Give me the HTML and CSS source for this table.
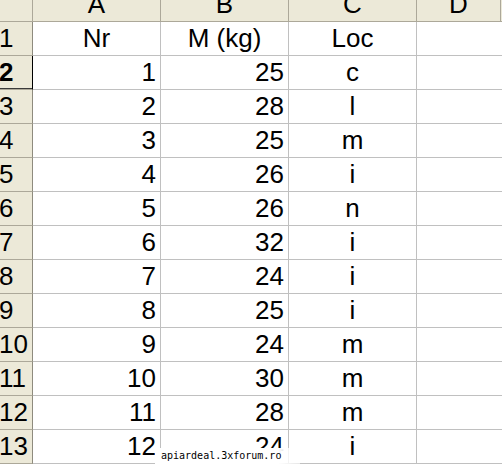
FILE: index.html
```html
<!DOCTYPE html>
<html>
<head>
<meta charset="utf-8">
<link rel="stylesheet" href="styles.css">
</head>
<body>
<div class="sheet">
  <div class="hd corner"></div>
  <div class="hd col"><span>A</span></div>
  <div class="hd col"><span>B</span></div>
  <div class="hd col"><span>C</span></div>
  <div class="hd col"><span>D</span></div>
  <div class="hd colend"></div>

  <div class="rh">1</div><div class="c ctr">Nr</div><div class="c ctr">M (kg)</div><div class="c ctr">Loc</div><div class="c d"></div>
  <div class="rh active">2</div><div class="c num">1</div><div class="c num">25</div><div class="c ctr">c</div><div class="c d"></div>
  <div class="rh">3</div><div class="c num">2</div><div class="c num">28</div><div class="c ctr">l</div><div class="c d"></div>
  <div class="rh">4</div><div class="c num">3</div><div class="c num">25</div><div class="c ctr">m</div><div class="c d"></div>
  <div class="rh">5</div><div class="c num">4</div><div class="c num">26</div><div class="c ctr">i</div><div class="c d"></div>
  <div class="rh">6</div><div class="c num">5</div><div class="c num">26</div><div class="c ctr">n</div><div class="c d"></div>
  <div class="rh">7</div><div class="c num">6</div><div class="c num">32</div><div class="c ctr">i</div><div class="c d"></div>
  <div class="rh">8</div><div class="c num">7</div><div class="c num">24</div><div class="c ctr">i</div><div class="c d"></div>
  <div class="rh">9</div><div class="c num">8</div><div class="c num">25</div><div class="c ctr">i</div><div class="c d"></div>
  <div class="rh">10</div><div class="c num">9</div><div class="c num">24</div><div class="c ctr">m</div><div class="c d"></div>
  <div class="rh">11</div><div class="c num">10</div><div class="c num">30</div><div class="c ctr">m</div><div class="c d"></div>
  <div class="rh">12</div><div class="c num">11</div><div class="c num">28</div><div class="c ctr">m</div><div class="c d"></div>
  <div class="rh">13</div><div class="c num">12</div><div class="c num">24</div><div class="c ctr">i</div><div class="c d"></div>
</div>
<div class="watermark">apiardeal.3xforum.ro</div>
</body>
</html>
```

FILE: styles.css
```css
html, body {
  margin: 0;
  padding: 0;
  background: #ffffff;
  overflow: hidden;
}
body {
  width: 502px;
  height: 464px;
  position: relative;
  font-family: "Liberation Sans", Arial, sans-serif;
  font-size: 26px;
  color: #000;
}
.sheet {
  display: grid;
  grid-template-columns: 33px 128px 128px 128px 84px 1px;
  grid-template-rows: 22px;
  grid-auto-rows: 34px;
}
.sheet > div {
  box-sizing: border-box;
  overflow: hidden;
  white-space: nowrap;
  line-height: 33px;
}
.hd {
  background: #ece9d8;
  border-right: 1px solid #aca899;
  border-bottom: 1px solid #aca899;
  text-align: center;
}
.hd span {
  display: block;
  margin-top: -12px;
  line-height: 33px;
}
.colend {
  border-right: none;
}
.rh {
  grid-column: 1;
  background: #ece9d8;
  border-right: 1px solid #8e8b7e;
  border-bottom: 1px solid #aca899;
  text-indent: -1px;
}
.rh.active {
  font-weight: bold;
  border-right: 1px solid #000;
  box-shadow: inset 0 -1px 0 #3a3a3a;
}
.c {
  border-right: 1px solid #c0c0c0;
  border-bottom: 1px solid #c0c0c0;
}
.c.d {
  grid-column: 5 / span 2;
  border-right: none;
}
.num {
  text-align: right;
  padding-right: 4px;
}
.ctr {
  text-align: center;
}
.watermark {
  position: absolute;
  left: 155px;
  top: 448px;
  width: 145px;
  height: 16px;
  padding-left: 6px;
  box-sizing: border-box;
  background: linear-gradient(to right, #fff 0, #fff 85%, rgba(255,255,255,0.6) 100%);
  font-family: "DejaVu Sans Mono", monospace;
  font-size: 10px;
  line-height: 16px;
  color: #000;
  white-space: nowrap;
}
```
